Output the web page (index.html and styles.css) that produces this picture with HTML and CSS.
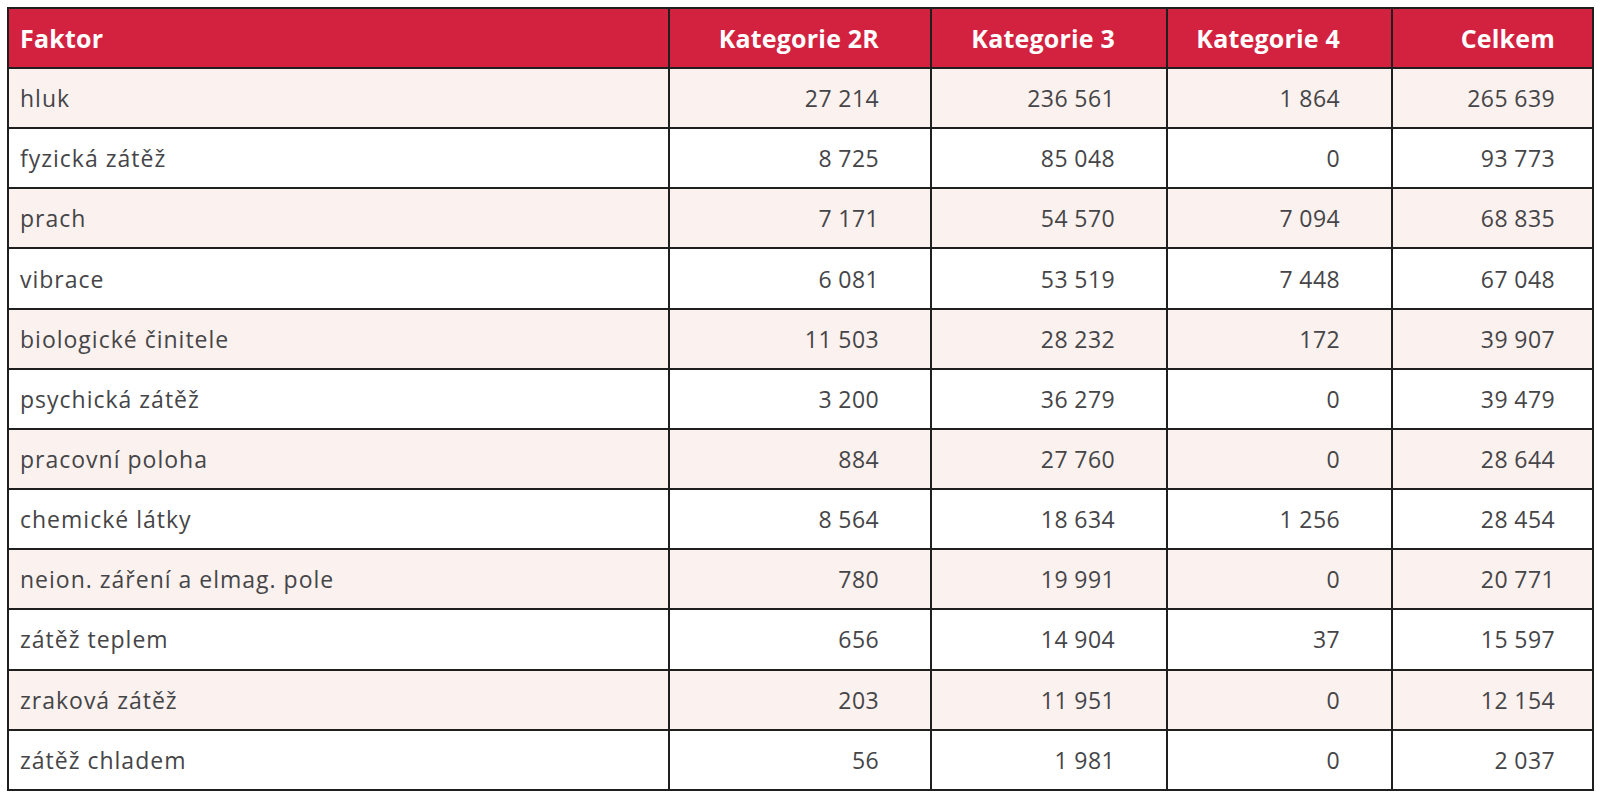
FILE: index.html
```html
<!DOCTYPE html>
<html lang="cs">
<head>
<meta charset="utf-8">
<title>Faktory</title>
<link rel="stylesheet" href="styles.css">
</head>
<body>
<table class="data">
  <colgroup>
    <col class="c-name">
    <col class="c-2r">
    <col class="c-3">
    <col class="c-4">
    <col class="c-sum">
  </colgroup>
  <thead>
    <tr>
      <th class="name">Faktor</th>
      <th>Kategorie 2R</th>
      <th>Kategorie 3</th>
      <th>Kategorie 4</th>
      <th class="sum">Celkem</th>
    </tr>
  </thead>
  <tbody>
    <tr><td class="name">hluk</td><td>27 214</td><td>236 561</td><td>1 864</td><td class="sum">265 639</td></tr>
    <tr><td class="name">fyzická zátěž</td><td>8 725</td><td>85 048</td><td>0</td><td class="sum">93 773</td></tr>
    <tr><td class="name">prach</td><td>7 171</td><td>54 570</td><td>7 094</td><td class="sum">68 835</td></tr>
    <tr><td class="name">vibrace</td><td>6 081</td><td>53 519</td><td>7 448</td><td class="sum">67 048</td></tr>
    <tr><td class="name">biologické činitele</td><td>11 503</td><td>28 232</td><td>172</td><td class="sum">39 907</td></tr>
    <tr><td class="name">psychická zátěž</td><td>3 200</td><td>36 279</td><td>0</td><td class="sum">39 479</td></tr>
    <tr><td class="name">pracovní poloha</td><td>884</td><td>27 760</td><td>0</td><td class="sum">28 644</td></tr>
    <tr><td class="name">chemické látky</td><td>8 564</td><td>18 634</td><td>1 256</td><td class="sum">28 454</td></tr>
    <tr><td class="name">neion. záření a elmag. pole</td><td>780</td><td>19 991</td><td>0</td><td class="sum">20 771</td></tr>
    <tr><td class="name">zátěž teplem</td><td>656</td><td>14 904</td><td>37</td><td class="sum">15 597</td></tr>
    <tr><td class="name">zraková zátěž</td><td>203</td><td>11 951</td><td>0</td><td class="sum">12 154</td></tr>
    <tr><td class="name">zátěž chladem</td><td>56</td><td>1 981</td><td>0</td><td class="sum">2 037</td></tr>
  </tbody>
</table>
</body>
</html>
```
FILE: styles.css
```css
html, body {
  margin: 0;
  padding: 0;
  background: #ffffff;
}

body {
  padding: 7px 0 0 7px;
  font-family: "Open Sans", "Liberation Sans", sans-serif;
}

.data {
  border-collapse: collapse;
  table-layout: fixed;
  width: 1585px;
  border: 2px solid #1f1f1f;
}

.c-name { width: 661px; }
.c-2r { width: 262px; }
.c-3 { width: 236px; }
.c-4 { width: 225px; }
.c-sum { width: 201px; }

.data th,
.data td {
  border: 2px solid #1f1f1f;
  padding: 0 51px 0 11px;
  text-align: right;
  white-space: nowrap;
  vertical-align: middle;
}

.data th {
  height: 58px;
  background: #d3223f;
  color: #ffffff;
  font-weight: 700;
  font-size: 25px;
  letter-spacing: 0.2px;
}

.data td {
  height: 58.17px;
  color: #454548;
  font-size: 23px;
  font-weight: 400;
  letter-spacing: 0.4px;
}

.data td.name {
  text-align: left;
  letter-spacing: 1px;
}

.data th.name {
  text-align: left;
}

.data .sum {
  padding-right: 37px;
}

.data tbody tr:nth-child(odd) td {
  background: #fbf1ee;
}
```
